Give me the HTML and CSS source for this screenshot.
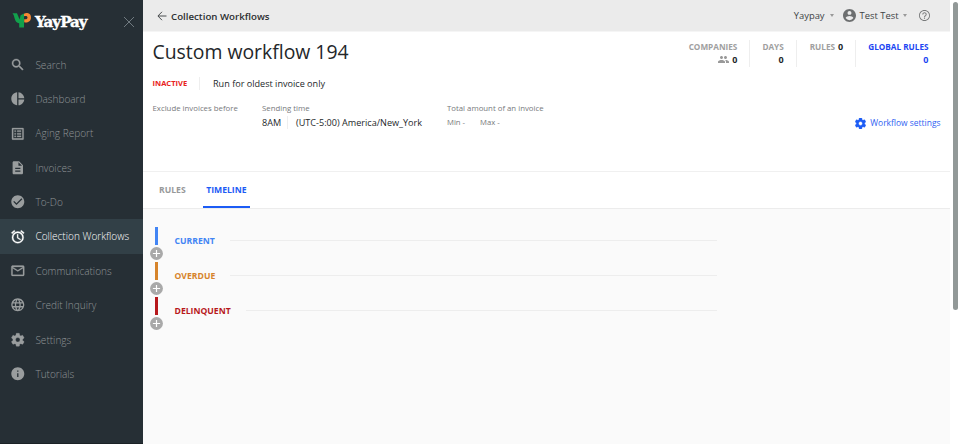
FILE: index.html
```html
<!DOCTYPE html>
<html lang="en">
<head>
<meta charset="utf-8">
<title>Custom workflow 194</title>
<link rel="stylesheet" href="styles.css">
</head>
<body>
<div class="app">
  <aside class="sidebar">
    <div class="brand">
      <svg class="brand-mark" viewBox="0 0 20 17"><path d="M.5 1.200H5l2.600 6.300L8.600 3.200 12 1.500V15.600H7.200v-4.400C4 10.800 3 8 2.300 5.200 1.900 3.500 1.500 2.400.5 1.200z" fill="#12a04c"/><path d="M12 1.800C14 .3 19 .9 19 5.400c0 4.300-4 5.600-6.800 4.800V7.200c2.200.5 3.300-.3 3.300-1.700 0-1.500-1.300-2-3.500-1.200z" fill="#f68a33"/></svg>
      <span class="brand-name">YayPay</span>
      <svg class="close" viewBox="0 0 12 12"><path d="M1 1l10 10M11 1L1 11"/></svg>
    </div>
    <nav class="nav">
      <a class="item"><svg class="ico" viewBox="0 0 24 24"><path d="M15.500 14h-.79l-.28-.27A6.471 6.471 0 0 0 16 9.500 6.500 6.500 0 1 0 9.500 16c1.610 0 3.090-.59 4.230-1.570l.27.28v.79l5 4.990L20.490 19l-4.990-5zm-6 0C7.010 14 5 11.990 5 9.500S7.010 5 9.500 5 14 7.010 14 9.500 11.990 14 9.500 14z" stroke="currentColor" stroke-width=".5"/></svg><span>Search</span></a>
      <a class="item"><svg class="ico" viewBox="0 0 24 24"><path d="M11 2v20c-5.070-.5-9-4.790-9-10s3.930-9.500 9-10zm2.030 0v8.990H22c-.47-4.740-4.240-8.520-8.970-8.990zm0 11.010V22c4.740-.47 8.500-4.250 8.970-8.990h-8.970z"/></svg><span>Dashboard</span></a>
      <a class="item"><svg class="ico" viewBox="0 0 24 24"><path d="M19 5v14H5V5h14m1.100-2H3.900c-.5 0-.9.400-.9.900v16.200c0 .4.400.9.900.9h16.200c.4 0 .9-.5.900-.9V3.900c0-.5-.5-.9-.9-.9zM11 7h6v2h-6V7zm0 4h6v2h-6v-2zm0 4h6v2h-6zM7 7h2v2H7zm0 4h2v2H7zm0 4h2v2H7z" stroke="currentColor" stroke-width=".4"/></svg><span>Aging Report</span></a>
      <a class="item"><svg class="ico" viewBox="0 0 24 24"><path d="M14 2H6c-1.100 0-1.990.9-1.990 2L4 20c0 1.100.89 2 1.990 2H18c1.100 0 2-.9 2-2V8l-6-6zm2 16H8v-2h8v2zm0-4H8v-2h8v2zm-3-5V3.500L18.500 9H13z"/></svg><span>Invoices</span></a>
      <a class="item"><svg class="ico" viewBox="0 0 24 24"><path d="M12 2C6.480 2 2 6.480 2 12s4.480 10 10 10 10-4.480 10-10S17.520 2 12 2zm-2 15l-5-5 1.410-1.410L10 14.170l7.590-7.590L19 8l-9 9z"/></svg><span>To-Do</span></a>
      <a class="item active"><svg class="ico" viewBox="0 0 24 24"><path d="M22 5.720l-4.600-3.860-1.290 1.530 4.600 3.860L22 5.720zM7.880 3.390L6.600 1.860 2 5.710l1.290 1.530 4.590-3.850zM12.500 8H11v6l4.750 2.850.75-1.230-4-2.370V8zM12 4a9 9 0 1 0 0 18 9 9 0 0 0 0-18zm0 16a7 7 0 1 1 0-14 7 7 0 0 1 0 14z" stroke="currentColor" stroke-width=".5"/></svg><span>Collection Workflows</span></a>
      <a class="item"><svg class="ico" viewBox="0 0 24 24"><path d="M20 4H4c-1.100 0-1.990.9-1.990 2L2 18c0 1.100.9 2 2 2h16c1.100 0 2-.9 2-2V6c0-1.100-.9-2-2-2zm0 14H4V8l8 5 8-5v10zm-8-7L4 6h16l-8 5z" stroke="currentColor" stroke-width=".4"/></svg><span>Communications</span></a>
      <a class="item"><svg class="ico" viewBox="0 0 24 24"><path d="M11.990 2C6.470 2 2 6.480 2 12s4.470 10 9.990 10C17.520 22 22 17.520 22 12S17.520 2 11.990 2zm6.930 6h-2.950a15.650 15.650 0 0 0-1.380-3.560A8.030 8.030 0 0 1 18.920 8zM12 4.040c.83 1.200 1.480 2.530 1.910 3.960h-3.820c.43-1.430 1.080-2.760 1.910-3.960zM4.260 14C4.100 13.360 4 12.690 4 12s.1-1.360.26-2h3.380c-.08.66-.14 1.320-.14 2s.06 1.340.14 2H4.260zm.82 2h2.950c.32 1.250.78 2.450 1.380 3.560A7.987 7.987 0 0 1 5.080 16zm2.950-8H5.080a7.987 7.987 0 0 1 4.330-3.560A15.650 15.650 0 0 0 8.030 8zM12 19.960c-.83-1.200-1.480-2.530-1.910-3.960h3.820c-.43 1.430-1.080 2.760-1.910 3.960zM14.340 14H9.660c-.09-.66-.16-1.320-.16-2s.07-1.350.16-2h4.680c.09.65.16 1.320.16 2s-.07 1.340-.16 2zm.25 5.560c.6-1.110 1.060-2.310 1.380-3.560h2.950a8.030 8.030 0 0 1-4.330 3.560zM16.360 14c.08-.66.14-1.320.14-2s-.06-1.340-.14-2h3.380c.16.64.26 1.310.26 2s-.1 1.360-.26 2h-3.380z"/></svg><span>Credit Inquiry</span></a>
      <a class="item"><svg class="ico" viewBox="0 0 24 24"><path d="M19.430 12.980c.04-.32.07-.64.07-.98s-.03-.66-.07-.98l2.110-1.650c.19-.15.24-.42.12-.64l-2-3.460c-.12-.22-.39-.3-.61-.22l-2.490 1c-.52-.4-1.080-.73-1.690-.98l-.38-2.650A.488.488 0 0 0 14 2h-4c-.25 0-.46.18-.49.42l-.38 2.650c-.61.25-1.170.59-1.690.98l-2.490-1c-.23-.09-.49 0-.61.22l-2 3.460c-.13.22-.07.49.12.64l2.110 1.650c-.04.32-.07.65-.07.98s.03.66.07.98l-2.110 1.650c-.19.15-.24.42-.12.64l2 3.460c.12.22.39.3.61.22l2.490-1c.52.4 1.080.73 1.690.98l.38 2.650c.03.24.24.42.49.42h4c.25 0 .46-.18.49-.42l.38-2.650c.61-.25 1.170-.59 1.690-.98l2.490 1c.23.09.49 0 .61-.22l2-3.460c.12-.22.07-.49-.12-.64l-2.110-1.650zM12 15.500a3.500 3.500 0 1 1 0-7 3.500 3.500 0 0 1 0 7z" stroke="currentColor" stroke-width=".5"/></svg><span>Settings</span></a>
      <a class="item"><svg class="ico" viewBox="0 0 24 24"><path d="M12 2C6.480 2 2 6.480 2 12s4.480 10 10 10 10-4.480 10-10S17.520 2 12 2zm1 15h-2v-6h2v6zm0-8h-2V7h2v2z"/></svg><span>Tutorials</span></a>
    </nav>
  </aside>

  <main class="main">
    <header class="topbar">
      <svg class="back" viewBox="0 0 10 10"><path d="M9.500 5H1M5 .8L.9 5 5 9.200"/></svg>
      <span class="crumb">Collection Workflows</span>
      <span class="org">Yaypay</span><i class="caret"></i>
      <svg class="avatar" viewBox="2 2 20 20"><path d="M12 2C6.480 2 2 6.480 2 12s4.480 10 10 10 10-4.480 10-10S17.520 2 12 2zm0 3c1.660 0 3 1.340 3 3s-1.340 3-3 3-3-1.340-3-3 1.340-3 3-3zm0 14.200a7.200 7.200 0 0 1-6-3.220c.03-1.990 4-3.080 6-3.080 1.990 0 5.970 1.090 6 3.080a7.200 7.200 0 0 1-6 3.220z"/></svg>
      <span class="user">Test Test</span><i class="caret caret-user"></i>
      <svg class="help" viewBox="2 2 20 20"><path d="M11 18h2v-2h-2v2zm1-16C6.480 2 2 6.480 2 12s4.480 10 10 10 10-4.480 10-10S17.520 2 12 2zm0 18.400c-4.600 0-8.400-3.800-8.400-8.400S7.400 3.600 12 3.600s8.400 3.800 8.400 8.400-3.800 8.400-8.400 8.400zM12 6c-2.210 0-4 1.790-4 4h1.800c0-1.200 1-2.200 2.200-2.200s2.200 1 2.200 2.200c0 2-3.100 1.750-3.100 5h1.800c0-2.250 3.100-2.500 3.100-5 0-2.210-1.790-4-4-4z"/></svg>
    </header>

    <section class="summary">
      <div class="info">
        <h1 class="title">Custom workflow 194</h1>
        <div class="status"><span class="state">INACTIVE</span><span class="mode">Run for oldest invoice only</span></div>
        <div class="facts">
          <div class="fact exclude"><span class="label">Exclude invoices before</span></div>
          <div class="fact sending"><span class="label">Sending time</span><div class="value"><span class="hour">8AM</span><span class="zone">(UTC-5:00) America/New_York</span></div></div>
          <div class="fact amount"><span class="label">Total amount of an invoice</span><div class="value range"><span>Min -</span><span>Max -</span></div></div>
        </div>
      </div>
      <div class="aside">
        <div class="stats">
          <div class="stat"><span>COMPANIES</span><b><svg class="people" viewBox="1 5 22 14"><path d="M16 11c1.660 0 2.990-1.340 2.990-3S17.660 5 16 5s-3 1.340-3 3 1.340 3 3 3zm-8 0c1.660 0 2.990-1.340 2.990-3S9.660 5 8 5 5 6.340 5 8s1.340 3 3 3zm0 2c-2.330 0-7 1.170-7 3.500V19h14v-2.500c0-2.330-4.670-3.500-7-3.500zm8 0c-.29 0-.62.02-.97.05 1.160.84 1.970 1.970 1.970 3.450V19h6v-2.500c0-2.330-4.670-3.500-7-3.500z"/></svg>0</b></div>
          <div class="stat"><span>DAYS</span><b>0</b></div>
          <div class="stat inline"><span>RULES</span><b>0</b></div>
          <div class="stat global"><span>GLOBAL RULES</span><b>0</b></div>
        </div>
        <a class="settings"><svg viewBox="2 2 20 20"><path d="M19.430 12.980c.04-.32.07-.64.07-.98s-.03-.66-.07-.98l2.110-1.650c.19-.15.24-.42.12-.64l-2-3.460c-.12-.22-.39-.3-.61-.22l-2.490 1c-.52-.4-1.080-.73-1.690-.98l-.38-2.650A.488.488 0 0 0 14 2h-4c-.25 0-.46.18-.49.42l-.38 2.650c-.61.25-1.170.59-1.690.98l-2.490-1c-.23-.09-.49 0-.61.22l-2 3.460c-.13.22-.07.49.12.64l2.110 1.650c-.04.32-.07.65-.07.98s.03.66.07.98l-2.110 1.650c-.19.15-.24.42-.12.64l2 3.460c.12.22.39.3.61.22l2.490-1c.52.4 1.080.73 1.690.98l.38 2.650c.03.24.24.42.49.42h4c.25 0 .46-.18.49-.42l.38-2.650c.61-.25 1.170-.59 1.690-.98l2.490 1c.23.09.49 0 .61-.22l2-3.460c.12-.22.07-.49-.12-.64l-2.110-1.650zM12 15.500a3.500 3.500 0 1 1 0-7 3.500 3.500 0 0 1 0 7z" stroke="currentColor" stroke-width=".6"/></svg>Workflow settings</a>
      </div>
    </section>

    <div class="tabs"><a class="tab">RULES</a><a class="tab selected">TIMELINE</a></div>

    <section class="timeline">
      <div class="stage current"><div class="rail"><i class="bar"></i><svg class="plus" viewBox="0 0 13 13"><circle cx="6.500" cy="6.500" r="6.400"/><path d="M6.500 2.900v7.200M2.900 6.500h7.200"/></svg></div><span class="name">CURRENT</span><i class="rule"></i></div>
      <div class="stage overdue"><div class="rail"><i class="bar"></i><svg class="plus" viewBox="0 0 13 13"><circle cx="6.500" cy="6.500" r="6.400"/><path d="M6.500 2.900v7.200M2.900 6.500h7.200"/></svg></div><span class="name">OVERDUE</span><i class="rule"></i></div>
      <div class="stage delinquent"><div class="rail"><i class="bar"></i><svg class="plus" viewBox="0 0 13 13"><circle cx="6.500" cy="6.500" r="6.400"/><path d="M6.500 2.900v7.200M2.900 6.500h7.200"/></svg></div><span class="name">DELINQUENT</span><i class="rule"></i></div>
    </section>
  </main>
  <div class="scroll"><div class="thumb"></div></div>
</div>
</body>
</html>
```
FILE: styles.css
```css
* { box-sizing: border-box; }
body { margin: 0; background: #fff; color: #24272a; font-family: "Open Sans", sans-serif; }
svg { display: block; flex: none; fill: currentColor; }
.app { display: flex; width: 960px; height: 444px; overflow: hidden; }

.sidebar { flex: none; width: 143px; background: #262f35; border-bottom: 1px solid #1b2226; }
.brand { display: flex; align-items: center; height: 47.600px; padding: 0 8px 4px 12px; }
.brand-mark { width: 20px; height: 17px; margin-top: -2px; }
.brand-name { margin-left: 3px; width: 86px; color: #fff; font: bold 15px/20px "DejaVu Serif", serif; letter-spacing: -.950px; -webkit-text-stroke: .4px #fff; }
.close { width: 12px; height: 12px; margin-left: 3px; fill: none; stroke: #707a80; stroke-width: 1; }
.item { display: flex; align-items: center; height: 34.350px; padding: 0 0 0 10px; color: #8f9496; font-size: 10.050px; font-weight: 300; white-space: nowrap; }
.ico { width: 15.600px; height: 15.600px; margin-right: 9.800px; color: #999d9e; }
.item.active { background: #324047; color: #fff; }
.active .ico { color: #fff; }

.main { display: flex; flex-direction: column; width: 807px; background: #fafafa; }
.topbar { display: flex; flex: none; align-items: center; height: 32px; padding: 0 20px 0 14px; background: #ebebeb; border-bottom: 1px solid #f5f5f5; color: #404346; font-size: 9.400px; }
.back { width: 10px; height: 10px; fill: none; stroke: #4b4e50; stroke-width: 1; }
.crumb { margin-left: 4px; margin-right: auto; color: #2b2e30; font-size: 9.700px; font-weight: 600; padding-top: 1px; }
.caret { margin-left: 5px; border: 2.500px solid transparent; border-top: 3px solid #999; border-bottom: 0; }
.avatar { width: 13px; height: 13px; margin: 0 4px 0 9px; color: #6d6f70; }
.caret-user { margin-left: 4.500px; }
.help { width: 11px; height: 11px; margin-left: 12px; color: #77797a; }

.summary { display: flex; flex: none; justify-content: space-between; height: 140px; background: #fff; border-bottom: 1px solid #f0f0f0; }
.info { padding-left: 9.500px; }
.title { margin: 0; padding-top: 6px; font-size: 19.400px; line-height: 28px; font-weight: 400; }
.status { display: flex; align-items: center; height: 14px; margin-top: 10px; font-size: 9.100px; }
.state { width: 47px; height: 13px; line-height: 13px; color: #e8221c; font-size: 7.550px; font-weight: 700; border-right: 1px solid #eee; }
.mode { margin-left: 13.500px; }
.facts { display: flex; margin-top: 12px; }
.fact { height: 30px; }
.exclude { width: 109.500px; }
.sending { width: 185px; }
.label { display: block; color: #77797c; font-size: 7.800px; line-height: 13px; white-space: nowrap; }
.value { display: flex; margin-top: 1px; font-size: 9.100px; line-height: 13px; white-space: nowrap; }
.hour { width: 26px; border-right: 1px solid #eee; }
.zone { margin-left: 8px; }
.range { gap: 15px; color: #77797c; font-size: 7.700px; }
.aside { display: flex; flex-direction: column; align-items: flex-end; padding: 8px 9.500px 0 0; }
.stats { display: flex; }
.stat { display: flex; flex-direction: column; align-items: flex-end; height: 27px; padding: 0 12px; border-right: 1px solid #eee; color: #a0a0a0; font-size: 8.200px; font-weight: 700; line-height: 13px; white-space: nowrap; }
.stat b { display: flex; align-items: center; color: #24272a; font-size: 9px; font-weight: 700; }
.inline { flex-direction: row; align-items: flex-start; gap: 3px; padding-left: 13px; }
.people { width: 11px; height: 7px; margin-right: 3px; color: #999; }
.global, .global b { color: #1c46f2; }
.global { border-right: 0; }
.settings { display: flex; align-items: center; gap: 4px; margin-top: 49px; color: #2f62f2; font-size: 8.450px; line-height: 14px; }
.settings svg { width: 11px; height: 11px; color: #1c5cf5; }

.tabs { display: flex; flex: none; height: 37px; padding-left: 13px; background: #fff; border-bottom: 1px solid #ececec; }
.tab { height: 36px; padding: 0 3px; margin-right: 14.500px; color: #97999a; font-size: 8.650px; font-weight: 700; line-height: 36px; }
.tab.selected { color: #1c5cf5; border-bottom: 2px solid #1c5cf5; }

.timeline { width: 574px; padding: 18px 0 0 6px; }
.stage { display: flex; height: 35px; }
.rail { display: flex; flex-direction: column; align-items: center; width: 14px; }
.bar { width: 3px; height: 18px; background: currentColor; }
.plus { width: 13px; height: 13px; margin-top: 2px; fill: #a9a9a9; stroke: #fff; stroke-width: 1.200; }
.plus circle { stroke: none; }
.name { margin-left: 11.500px; font-size: 8.650px; font-weight: 700; line-height: 29px; }
.rule { flex: 1; height: 1px; margin: 13px 0 0 15px; background: #ededed; }
.current { color: #4285f4; }
.overdue { color: #d6842b; }
.delinquent { color: #b7181c; }

.scroll { display: flex; justify-content: center; width: 10px; padding-top: 2px; background: #fff; }
.thumb { width: 5px; height: 308px; border-radius: 3px; background: #929998; }
```
